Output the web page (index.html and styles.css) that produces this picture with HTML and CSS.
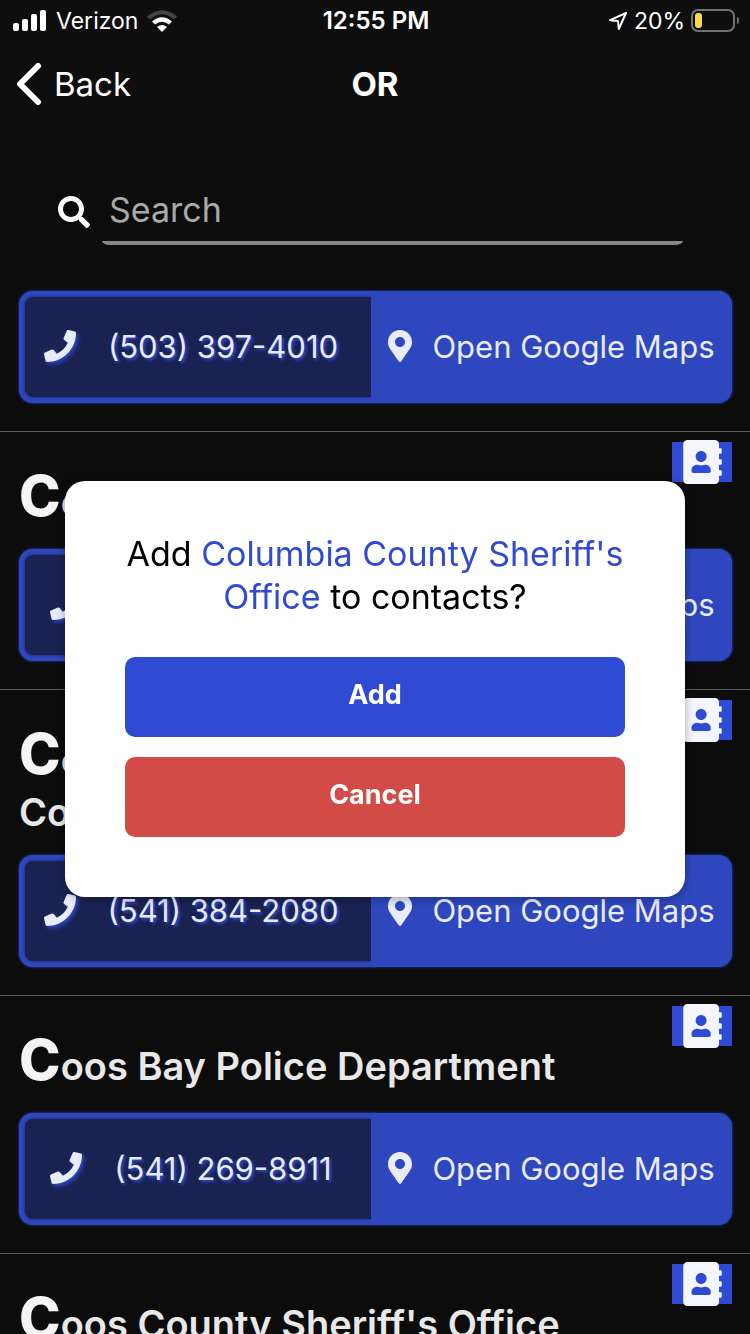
FILE: index.html
```html
<!DOCTYPE html>
<html lang="en">
<head>
<meta charset="utf-8">
<meta name="viewport" content="width=device-width, initial-scale=1">
<title>OR</title>
<link rel="stylesheet" href="styles.css">
</head>
<body>
<svg class="sprite" aria-hidden="true">
  <symbol id="phone" viewBox="0 0 512 512"><path d="M493.4 24.6l-104-24c-11.3-2.6-22.9 3.3-27.5 13.9l-48 112c-4.2 9.8-1.4 21.3 6.9 28l60.6 49.6c-36 76.7-98.9 140.5-177.2 177.2l-49.6-60.6c-6.8-8.3-18.2-11.1-28-6.9l-112 48C3.9 366.5-2 378.1.6 389.4l24 104C27.1 504.2 36.7 512 48 512c256.1 0 464-207.5 464-464 0-11.2-7.7-20.9-18.6-23.4z"/></symbol>
  <symbol id="pin" viewBox="0 0 384 512"><path d="M172.268 501.67C26.97 291.031 0 269.413 0 192 0 85.961 85.961 0 192 0s192 85.961 192 192c0 77.413-26.97 99.031-172.268 309.67-9.535 13.774-29.93 13.773-39.464 0zM192 272c44.183 0 80-35.817 80-80s-35.817-80-80-80-80 35.817-80 80 35.817 80 80 80z"/></symbol>
  <symbol id="book" viewBox="0 0 448 512"><path d="M436 160c6.6 0 12-5.4 12-12v-40c0-6.6-5.4-12-12-12h-20V48c0-26.5-21.5-48-48-48H48C21.5 0 0 21.5 0 48v416c0 26.5 21.5 48 48 48h320c26.5 0 48-21.5 48-48v-48h20c6.6 0 12-5.4 12-12v-40c0-6.6-5.4-12-12-12h-20v-64h20c6.6 0 12-5.4 12-12v-40c0-6.6-5.4-12-12-12h-20v-64h20zm-228-32c35.3 0 64 28.7 64 64s-28.7 64-64 64-64-28.7-64-64 28.7-64 64-64zm112 236.8c0 10.6-10 19.2-22.4 19.2H118.4C106 384 96 375.4 96 364.8v-19.2c0-31.8 30.1-57.6 67.2-57.6h5c12.3 5.1 25.7 8 39.8 8s27.6-2.9 39.8-8h5c37.1 0 67.2 25.8 67.2 57.6v19.2z"/></symbol>
</svg>

<div class="status">
  <div class="status-side">
    <svg class="signal" viewBox="0 0 34 22" aria-hidden="true"><rect x="0" y="13" width="6" height="8" rx="2"/><rect x="9" y="9" width="6" height="12" rx="2"/><rect x="18" y="4" width="6" height="17" rx="2"/><rect x="27" y="0" width="6" height="21" rx="2"/></svg>
    <span>Verizon</span>
    <svg class="wifi" viewBox="0 0 30 22" aria-hidden="true"><path class="wifi-dim" d="M0 6.500Q15-6 30 6.500L27 9.500Q15-1 3 9.500Z"/><path d="M5 11.500Q15 3 25 11.500L22 14.500Q15 9 8 14.500Z"/><path d="M10 17Q15 13 20 17L15 22Z"/></svg>
  </div>
  <time class="clock">12:55 PM</time>
  <div class="status-side status-end">
    <svg class="arrow" viewBox="0 0 20 20" aria-hidden="true"><path d="M18 2L2 9.200L10 10L10.800 18Z"/></svg>
    <span>20%</span>
    <svg class="battery" viewBox="0 0 48 24" aria-hidden="true"><rect class="battery-case" x="1" y="1" width="42" height="21" rx="6"/><rect class="battery-level" x="4" y="4" width="7" height="15" rx="3"/><path class="battery-tip" d="M46 8q2 0 2 3.500t-2 3.500z"/></svg>
  </div>
</div>

<header class="nav">
  <button class="back" type="button"><svg class="chevron" viewBox="0 0 26 42" aria-hidden="true"><path d="M22 3L4 21L22 39"/></svg>Back</button>
  <h1 class="nav-title">OR</h1>
</header>

<main>
  <form class="search">
    <label class="search-label" for="q" aria-label="Search"><svg class="search-icon" viewBox="0 0 512 512" aria-hidden="true"><path d="M505 442.700L405.300 343c-4.500-4.500-10.600-7-17-7H372c27.600-35.300 44-79.700 44-128C416 93.100 322.900 0 208 0S0 93.100 0 208s93.100 208 208 208c48.300 0 92.700-16.400 128-44v16.300c0 6.400 2.500 12.500 7 17l99.700 99.700c9.400 9.400 24.600 9.400 33.900 0l28.300-28.300c9.400-9.400 9.400-24.600.1-34zM208 336c-70.700 0-128-57.200-128-128 0-70.700 57.200-128 128-128 70.700 0 128 57.200 128 128 0 70.700-57.200 128-128 128z"/></svg></label>
    <input class="search-input" id="q" type="text" placeholder="Search">
  </form>

  <section class="entry">
    <div class="actions">
      <a class="call" href="tel:5033974010"><svg class="icon"><use href="#phone"/></svg>(503) 397-4010</a>
      <a class="map" href="#map"><svg class="icon-pin"><use href="#pin"/></svg>Open Google Maps</a>
    </div>
  </section>

  <section class="entry entry-ruled">
    <button class="contact" type="button" aria-label="Add to contacts"><svg class="icon-book"><use href="#book"/></svg></button>
    <h2 class="name">Co</h2>
    <div class="actions">
      <a class="call" href="tel:5412698911"><svg class="icon"><use href="#phone"/></svg>(541) 269-8911</a>
      <a class="map" href="#map"><svg class="icon-pin"><use href="#pin"/></svg>Open Google Maps</a>
    </div>
  </section>

  <section class="entry entry-ruled">
    <button class="contact" type="button" aria-label="Add to contacts"><svg class="icon-book"><use href="#book"/></svg></button>
    <h2 class="name">Co<br>Co</h2>
    <div class="actions">
      <a class="call" href="tel:5413842080"><svg class="icon"><use href="#phone"/></svg>(541) 384-2080</a>
      <a class="map" href="#map"><svg class="icon-pin"><use href="#pin"/></svg>Open Google Maps</a>
    </div>
  </section>

  <section class="entry entry-ruled">
    <button class="contact" type="button" aria-label="Add to contacts"><svg class="icon-book"><use href="#book"/></svg></button>
    <h2 class="name">Coos Bay Police Department</h2>
    <div class="actions">
      <a class="call" href="tel:5412698911"><svg class="icon"><use href="#phone"/></svg>(541) 269-8911</a>
      <a class="map" href="#map"><svg class="icon-pin"><use href="#pin"/></svg>Open Google Maps</a>
    </div>
  </section>

  <section class="entry entry-ruled">
    <button class="contact" type="button" aria-label="Add to contacts"><svg class="icon-book"><use href="#book"/></svg></button>
    <h2 class="name">Coos County Sheriff's Office</h2>
  </section>
</main>

<div class="overlay">
  <div class="dialog" role="dialog" aria-modal="true" aria-labelledby="question">
    <p class="question" id="question">Add <span class="agency">Columbia County Sheriff's Office</span> to contacts?</p>
    <button class="choice choice-add" type="button">Add</button>
    <button class="choice choice-cancel" type="button">Cancel</button>
  </div>
</div>
</body>
</html>
```

FILE: styles.css
```css
* {
  box-sizing: border-box;
}

html {
  height: 100%;
  overflow: hidden;
}

body {
  height: 100%;
  margin: 0;
  overflow: hidden;
  background: #0c0c0c;
  color: #fff;
  font-family: Inter, "Liberation Sans", sans-serif;
}

button,
input {
  margin: 0;
  padding: 0;
  border: 0;
  background: none;
  color: inherit;
  font: inherit;
}

svg {
  flex: none;
  fill: currentColor;
}

.sprite {
  position: absolute;
  width: 0;
  height: 0;
}

/* Status bar */
.status {
  display: grid;
  grid-template-columns: 1fr auto 1fr;
  align-items: center;
  height: 40px;
  padding: 1px 11px 0 13px;
  background: #0e0e0e;
  font-size: 23px;
}

.status-side {
  display: flex;
  align-items: center;
  gap: 9px;
}

.status-end {
  justify-content: flex-end;
  gap: 6px;
}

.clock {
  font-size: 24px;
  font-weight: 600;
}

.signal {
  width: 34px;
  height: 22px;
}

.wifi {
  width: 30px;
  height: 22px;
}

.wifi-dim {
  fill: #444;
}

.arrow {
  width: 20px;
  height: 20px;
  fill: none;
  stroke: #fff;
  stroke-width: 2;
  stroke-linejoin: round;
}

.battery {
  width: 48px;
  height: 24px;
}

.battery-case {
  fill: none;
  stroke: #717171;
  stroke-width: 2;
}

.battery-level {
  fill: #fad749;
}

.battery-tip {
  fill: #717171;
}

/* Navigation bar */
.nav {
  display: grid;
  grid-template-columns: 1fr auto 1fr;
  align-items: center;
  height: 88px;
  padding: 0 16px;
  background: #0e0e0e;
}

.back {
  display: flex;
  align-items: center;
  justify-self: start;
  gap: 12px;
  font-size: 33px;
}

.chevron {
  width: 26px;
  height: 42px;
  fill: none;
  stroke: #fff;
  stroke-width: 6;
  stroke-linecap: round;
  stroke-linejoin: round;
}

.nav-title {
  margin: 0;
  font-size: 33px;
  font-weight: 700;
}

/* Search */
.search {
  display: flex;
  align-items: center;
  gap: 12px;
  padding: 50px 67px 46px 58px;
}

.search-label {
  display: flex;
}

.search-icon {
  width: 32px;
  height: 32px;
}

.search-input {
  flex: 1;
  min-width: 0;
  height: 67px;
  padding: 0 7px;
  border-bottom: 4px solid #8a8686;
  border-radius: 0 0 8px 8px / 0 0 4px 4px;
  font-size: 34px;
}

.search-input::placeholder {
  color: #a9a9a9;
  opacity: 1;
}

/* Directory entries */
.entry {
  position: relative;
  padding: 0 18px 28px 19px;
}

.entry-ruled {
  padding-top: 36px;
  border-top: 1px solid #5c5c5c;
}

.contact {
  position: absolute;
  top: 10px;
  right: 18px;
  display: flex;
  align-items: center;
  justify-content: center;
  width: 60px;
  height: 40px;
  background: #304bd3;
  color: #f3f6ff;
}

.icon-book {
  width: 39px;
  height: 44px;
}

.name {
  margin: 0 0 19px;
  color: #e8e8e8;
  font-size: 38px;
  font-weight: 600;
  line-height: 48px;
}

.name::first-line {
  line-height: 56px;
}

.name::first-letter {
  color: #f4f4f4;
  font-size: 56px;
  font-weight: 800;
}

.actions {
  display: grid;
  grid-template-columns: 352px 1fr;
  height: 112px;
  overflow: hidden;
  border-radius: 14px;
  background: #2e47be;
  box-shadow: 0 0 3px #2e47be;
  font-size: 31px;
}

.call,
.map {
  display: flex;
  align-items: center;
  justify-content: center;
  padding-bottom: 2px;
  color: #e8ebf8;
  text-decoration: none;
  white-space: nowrap;
}

.call {
  gap: 32px;
  margin: 6px 0 6px 6px;
  padding-right: 14px;
  border-radius: 8px 0 0 8px;
  background: #1a2251;
  box-shadow: 0 0 3px #1a2251;
  text-shadow: 2px 2px 3px #304bd3;
}

.icon {
  width: 32px;
  height: 32px;
  filter: drop-shadow(2px 2px 2px #304bd3);
}

.map {
  gap: 20px;
  background: #2e47be;
}

.icon-pin {
  width: 24px;
  height: 32px;
}

/* Confirmation dialog */
.overlay {
  position: fixed;
  inset: 0;
  display: flex;
  align-items: center;
  justify-content: center;
  padding: 44px 65px 0;
}

.dialog {
  display: flex;
  flex-direction: column;
  gap: 20px;
  width: 100%;
  max-width: 620px;
  padding: 51px 60px 60px;
  border-radius: 20px;
  background: #fff;
  box-shadow: 0 2px 10px rgba(0, 0, 0, 0.3);
  color: #000;
}

.question {
  margin: 0 0 19px;
  font-size: 34px;
  line-height: 43px;
  text-align: center;
}

.agency {
  color: #304bd3;
}

.choice {
  height: 80px;
  padding-bottom: 6px;
  border-radius: 10px;
  color: #fff;
  font-size: 27px;
  font-weight: 700;
}

.choice-add {
  background: #304bd3;
}

.choice-cancel {
  background: #d24b46;
}
```
